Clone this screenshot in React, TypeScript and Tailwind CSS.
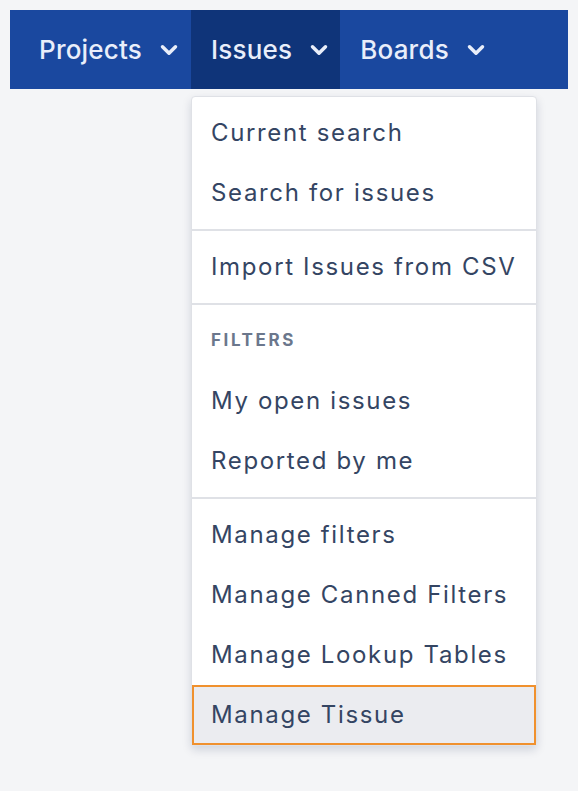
import { ChevronDown } from "lucide-react";

const NavItem = ({ label, active, first }: { label: string; active?: boolean; first?: boolean }) => (
    <div
        className={`relative flex items-center h-full pr-[8px] ${first ? "pl-[29px] pr-[9px]" : "pl-[20px]"} ${active ? "bg-[#0f3479]" : ""}`}
    >
        <span className="text-[26px] font-medium text-[#e9eefa] tracking-[0.2px]">{label}</span>
        <ChevronDown className="ml-[14px] text-[#e9eefa]" size={26} strokeWidth={3.2} />
        {active && <IssuesMenu />}
    </div>
);

const MenuItem = ({ label, selected }: { label: string; selected?: boolean }) => (
    <div
        className={`h-[60px] flex items-center text-[24px] tracking-[1.65px] text-[#344563] ${
            selected ? "bg-[#ebecf0] border-2 border-[#f0912e] pl-[17px]" : "pl-[19px]"
        }`}
    >
        {label}
    </div>
);

const IssuesMenu = () => (
    <div className="absolute left-0 top-full mt-[7px] w-[346px] bg-white rounded-[4px] border border-[#dfe1e6] shadow-[0_4px_10px_rgba(9,30,66,0.15)] z-10">
        <div className="py-[6px]">
            <MenuItem label="Current search" />
            <MenuItem label="Search for issues" />
        </div>
        <div className="py-[6px] border-t-2 border-[#dfe1e6]">
            <MenuItem label="Import Issues from CSV" />
        </div>
        <div className="py-[6px] border-t-2 border-[#dfe1e6]">
            <div className="h-[60px] flex items-center pl-[19px] text-[17px] font-bold tracking-[2.6px] text-[#6b778c]">
                FILTERS
            </div>
            <MenuItem label="My open issues" />
            <MenuItem label="Reported by me" />
        </div>
        <div className="pt-[6px] border-t-2 border-[#dfe1e6]">
            <MenuItem label="Manage filters" />
            <MenuItem label="Manage Canned Filters" />
            <MenuItem label="Manage Lookup Tables" />
            <MenuItem label="Manage Tissue" selected />
        </div>
    </div>
);

export default function App() {
    return (
        <div className="min-h-screen bg-[#f4f5f7] p-[10px] font-['Inter',sans-serif]">
            <nav className="flex h-[79px] bg-[#1a489f]">
                <NavItem label="Projects" first />
                <NavItem label="Issues" active />
                <NavItem label="Boards" />
            </nav>
        </div>
    );
}
